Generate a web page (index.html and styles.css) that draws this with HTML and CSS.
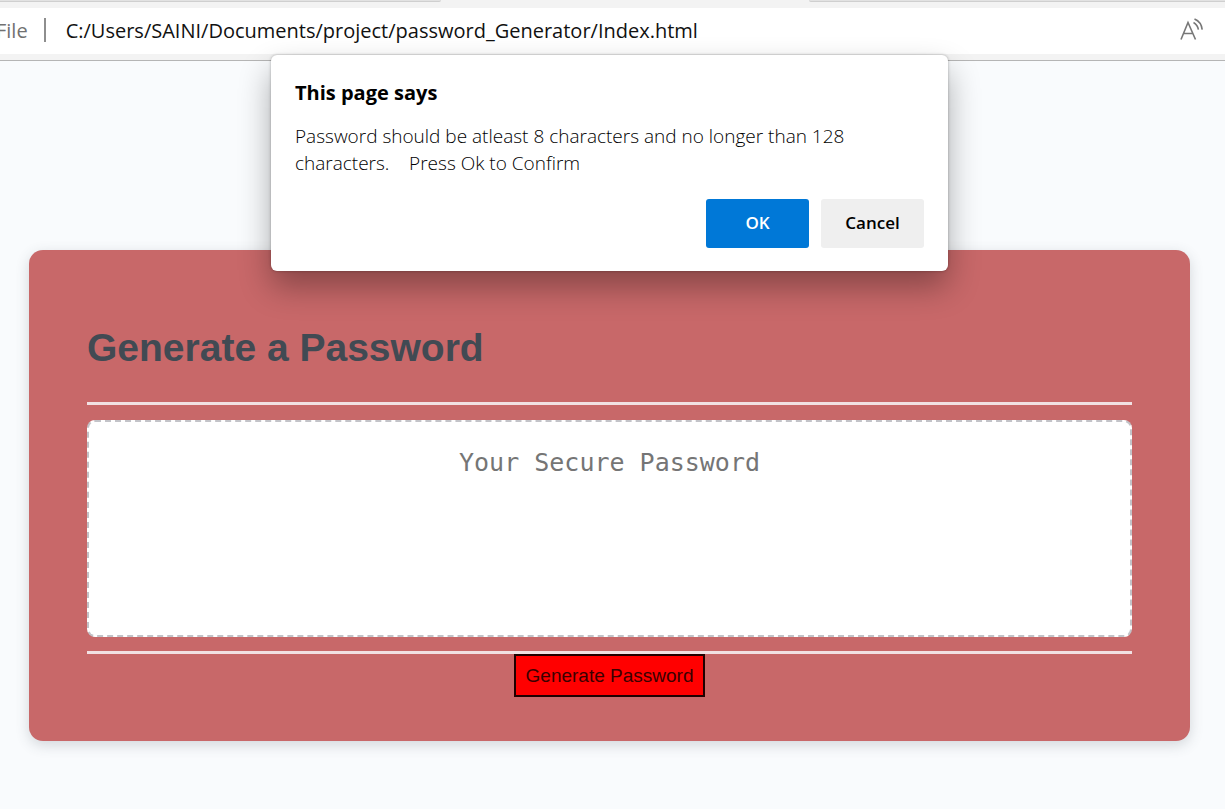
FILE: index.html
```
<!DOCTYPE html>
<html lang="en">
<head>
<meta charset="utf-8">
<title>Password Generator</title>
<link rel="stylesheet" href="styles.css">
</head>
<body>
<header class="browser">
  <div class="tabs"><span class="tab tab-left"></span><span class="tab tab-right"></span></div>
  <div class="address">
    <span class="scheme">File</span>
    <span class="divider"></span>
    <span class="url">C:/Users/SAINI/Documents/project/password_Generator/Index.html</span>
    <button class="read" type="button" aria-label="Read aloud">
      <svg width="26" height="26" viewBox="0 0 26 26" fill="none" stroke="#777" stroke-width="1.600"><path d="M3 22.500 10 5.500 17.500 22.500M5.500 16.500h9.400M15.500 5.500c3 1.600 4.400 4 4.900 7.200M16.500 2c4.300 1.800 7.200 5.700 7.700 10.700"/></svg>
    </button>
  </div>
</header>
<main class="page">
  <section class="card">
    <h1 class="title">Generate a Password</h1>
    <div class="body">
      <textarea class="password" placeholder="Your Secure Password" aria-label="Your Secure Password" readonly></textarea>
    </div>
    <div class="footer"><button class="generate" type="button">Generate Password</button></div>
  </section>
</main>
<dialog class="dialog" open aria-labelledby="dialog-title">
  <h2 class="dialog-title" id="dialog-title">This page says</h2>
  <p class="message">Password should be atleast 8 characters and no longer than 128 characters. &nbsp;&nbsp; Press Ok to Confirm</p>
  <div class="actions">
    <button class="action primary" type="button">OK</button>
    <button class="action" type="button">Cancel</button>
  </div>
</dialog>
</body>
</html>
```
FILE: styles.css
```
* { box-sizing: border-box; }
body {
  margin: 0;
  min-height: 100vh;
  background: #f9fbfd;
  font-family: "Liberation Sans", Arial, sans-serif;
}
.browser {
  padding-bottom: 6px;
  background: #f3f3f3;
  border-bottom: 1px solid #b5b5b5;
  font-family: "Open Sans", "Noto Sans", sans-serif;
}
.tabs {
  display: flex;
  justify-content: space-between;
  height: 8px;
}
.tab {
  height: 2px;
  background: #e2e2e2;
  border-bottom: 1px solid #cfcfcf;
}
.tab-left { width: 36%; border-bottom-right-radius: 4px; }
.tab-right { width: 34%; border-bottom-left-radius: 4px; }
.address {
  display: flex;
  align-items: center;
  height: 46px;
  padding: 0 21px 2px 0;
  background: #fff;
  font-size: 20px;
  white-space: nowrap;
}
.scheme { margin-left: -4px; color: #717171; }
.divider {
  width: 2px;
  height: 24px;
  margin: 0 20px 0 16px;
  background: #8e8e8e;
}
.url { flex: 1; color: #111; }
.read {
  display: flex;
  padding: 0;
  border: 0;
  background: none;
}
.page { padding: 189px 35px 68px 29px; }
.card {
  padding: 58px 58px 44px;
  border-radius: 14px;
  background: #c86869;
  box-shadow: 0 4px 14px rgba(60, 70, 80, 0.2);
}
.title {
  margin: 0;
  padding: 17px 0 31px;
  color: #414a53;
  font-size: 39px;
  line-height: 46px;
}
.body {
  padding: 15px 0 14px;
  border-top: 3px solid #f1e1e3;
  border-bottom: 3px solid #f1e1e3;
}
.password {
  display: block;
  width: 100%;
  height: 217px;
  padding: 24px;
  border: 2px dashed #c3c3c8;
  border-radius: 8px;
  background: #fff;
  font-family: "DejaVu Sans Mono", monospace;
  font-size: 25px;
  line-height: 34px;
  text-align: center;
  resize: none;
}
.password::placeholder { color: #757575; }
.footer { display: flex; justify-content: center; }
.generate {
  padding: 8px 10px;
  border: 2px solid #200000;
  background: #f00;
  color: #3a0000;
  font-family: inherit;
  font-size: 19px;
  line-height: 23px;
}
.dialog {
  position: absolute;
  top: 55px;
  right: 6px;
  left: 0;
  width: 677px;
  margin: 0 auto;
  padding: 24px 24px 23px;
  border: 0;
  border-radius: 6px;
  background: #fff;
  color: #000;
  box-shadow: 0 0 3px rgba(0, 0, 0, 0.3), 0 16px 32px rgba(0, 0, 0, 0.32);
  font-family: "Open Sans", "Noto Sans", sans-serif;
}
.dialog-title {
  margin: 0 0 16px;
  font-size: 20px;
  line-height: 28px;
}
.message {
  margin: 0 0 22px;
  color: #000;
  font-size: 19px;
  font-weight: 300;
  line-height: 27px;
}
.actions {
  display: flex;
  justify-content: flex-end;
  gap: 12px;
}
.action {
  width: 103px;
  height: 49px;
  padding: 0 0 2px;
  border: 0;
  border-radius: 3px;
  background: #efefef;
  color: #000;
  font-family: inherit;
  font-size: 17px;
  font-weight: 600;
}
.primary { background: #0078d7; color: #fff; }
```
